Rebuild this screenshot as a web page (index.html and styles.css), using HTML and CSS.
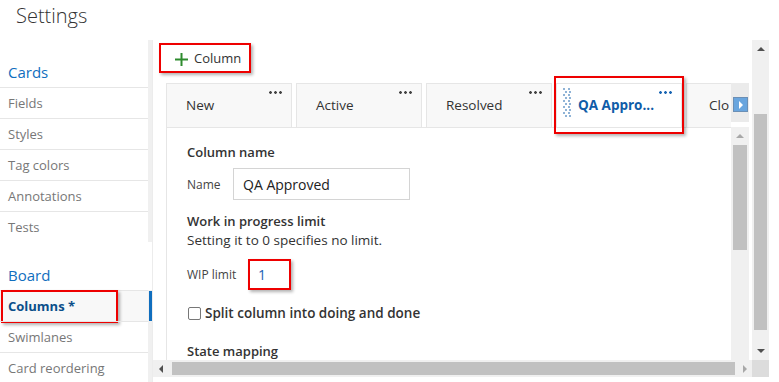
FILE: index.html
```html
<!DOCTYPE html>
<html lang="en">
  <head>
    <meta charset="UTF-8" />
    <title>Settings</title>
    <link rel="stylesheet" href="styles.css">
  </head>
  <body>
    <header class="top">
      <h1>Settings</h1>
    </header>
    <div class="main">
      <nav class="side">
        <h2>Cards</h2>
        <ul>
          <li>Fields</li>
          <li>Styles</li>
          <li>Tag colors</li>
          <li>Annotations</li>
          <li>Tests</li>
        </ul>
        <h2 class="board-head">Board</h2>
        <ul>
          <li class="active"><span class="mark">Columns *</span></li>
          <li>Swimlanes</li>
          <li>Card reordering</li>
        </ul>
      </nav>

      <div class="content">
        <div class="view">
          <div class="toolbar">
            <button class="add">
              <svg width="13" height="13" viewBox="0 0 13 13">
                <rect x="5.5" y="0" width="2" height="13" fill="#2e8b2e" />
                <rect x="0" y="5.5" width="13" height="2" fill="#2e8b2e" />
              </svg>
              Column
            </button>
          </div>
          <div class="board">
            <div class="board-main">
              <div class="tabs">
                <div class="tab">New<span class="more"></span></div>
                <div class="tab">Active<span class="more"></span></div>
                <div class="tab">Resolved<span class="more"></span></div>
                <div class="tab selected">
                  <svg class="grip" width="9" height="32" viewBox="0 0 9 32">
                    <g fill="#8fb3d6">
                      <rect x="0" y="0" width="2" height="2" /><rect x="5" y="0" width="2" height="2" />
                      <rect x="2" y="3" width="2" height="2" /><rect x="6" y="3" width="2" height="2" />
                      <rect x="0" y="6" width="2" height="2" /><rect x="5" y="6" width="2" height="2" />
                      <rect x="2" y="9" width="2" height="2" /><rect x="6" y="9" width="2" height="2" />
                      <rect x="0" y="12" width="2" height="2" /><rect x="5" y="12" width="2" height="2" />
                      <rect x="2" y="15" width="2" height="2" /><rect x="6" y="15" width="2" height="2" />
                      <rect x="0" y="18" width="2" height="2" /><rect x="5" y="18" width="2" height="2" />
                      <rect x="2" y="21" width="2" height="2" /><rect x="6" y="21" width="2" height="2" />
                      <rect x="0" y="24" width="2" height="2" /><rect x="5" y="24" width="2" height="2" />
                      <rect x="2" y="27" width="2" height="2" /><rect x="6" y="27" width="2" height="2" />
                    </g>
                  </svg>
                  QA Appro...<span class="more"></span>
                </div>
                <div class="tab last">Clo</div>
              </div>
              <div class="panel">
                <h3>Column name</h3>
                <div class="field">
                  <label>Name</label>
                  <input class="name-input" type="text" value="QA Approved">
                </div>
                <h3 class="wip-head">Work in progress limit</h3>
                <p class="hint">Setting it to 0 specifies no limit.</p>
                <div class="field wip">
                  <label>WIP limit</label>
                  <input class="wip-input" type="text" value="1">
                </div>
                <label class="check"><span class="box"></span>Split column into doing and done</label>
                <h3 class="state-head">State mapping</h3>
              </div>
            </div>
            <div class="rail">
              <div class="tab-arrow"><span class="arrow-btn"></span></div>
              <div class="vscroll inner">
                <span class="up light"></span>
                <span class="thumb"></span>
              </div>
            </div>
          </div>
        </div>
        <div class="vscroll outer">
          <span class="up"></span>
          <span class="thumb"></span>
          <span class="down"></span>
        </div>
        <div class="hscroll">
          <span class="left"></span>
          <span class="thumb"></span>
          <span class="right"></span>
        </div>
        <div class="corner"></div>
      </div>
    </div>
  </body>
</html>
```

FILE: styles.css
```css
body {
  margin: 0;
  font-family: "Open Sans", "Noto Sans", sans-serif;
  color: #333;
  background: white;
}
.top {
  height: 40px;
}
.top h1 {
  margin: 0;
  padding: 2px 0 0 16px;
  font-size: 20px;
  font-weight: 300;
  line-height: 28px;
  color: #333;
}
.main {
  display: flex;
  height: 342px;
}
.side {
  width: 148px;
  border-right: 4px solid #f0f0f0;
  flex-shrink: 0;
}
.side h2 {
  margin: 0;
  height: 47px;
  padding-left: 8px;
  box-sizing: border-box;
  display: flex;
  align-items: flex-end;
  padding-bottom: 5px;
  font-size: 15px;
  font-weight: 400;
  color: #106ebe;
}
.side h2.board-head {
  height: 48px;
  background: white;
  margin-right: -4px;
}
.side ul {
  list-style: none;
  margin: 0;
  padding: 0;
}
.side li {
  height: 31px;
  box-sizing: border-box;
  border-top: 1px solid #e6e6e6;
  padding-left: 8px;
  display: flex;
  align-items: center;
  font-size: 13px;
  color: #777;
  position: relative;
}
.side li.active {
  font-weight: 700;
  color: #0b4f8a;
  background: #f8f8f8;
}
.side li.active::after {
  content: "";
  position: absolute;
  top: 0;
  bottom: 0;
  right: -4px;
  width: 3px;
  background: #106ebe;
}
.mark {
  position: relative;
}
.mark::before {
  content: "";
  position: absolute;
  left: -7px;
  right: -43px;
  top: -7px;
  bottom: -8px;
  border: 2px solid #e00;
  box-shadow: 2px 2px 3px rgba(0, 0, 0, 0.3);
}
.content {
  flex: 1;
  display: grid;
  grid-template-columns: 599px 17px;
  grid-template-rows: 320px 17px;
  border-left: 1px solid #ececec;
}
.view {
  display: flex;
  flex-direction: column;
  min-height: 0;
}
.toolbar {
  flex-shrink: 0;
  height: 43px;
  padding: 3px 0 0 6px;
  box-sizing: border-box;
}
.add {
  display: flex;
  align-items: center;
  gap: 6px;
  height: 30px;
  width: 92px;
  padding: 0 0 0 14px;
  font-family: inherit;
  font-size: 13px;
  color: #333;
  background: white;
  border: 2px solid #e00;
  box-shadow: 2px 2px 3px rgba(0, 0, 0, 0.3);
  box-sizing: border-box;
}
.add svg {
  margin-top: 3px;
}
.board {
  flex: 1;
  min-height: 0;
  display: flex;
  margin: 0 2px 0 13px;
}
.board-main {
  width: 565px;
  min-height: 0;
  display: flex;
  flex-direction: column;
}
.tabs {
  flex-shrink: 0;
  display: flex;
  gap: 4px;
  height: 44px;
}
.tab {
  flex: 0 0 126px;
  box-sizing: border-box;
  background: #f8f8f8;
  border: 1px solid #e6e6e6;
  border-bottom: none;
  padding: 12px 0 0 19px;
  font-size: 13.5px;
  color: #333;
  position: relative;
  white-space: nowrap;
}
.tab.last {
  flex: 0 0 45px;
  overflow: hidden;
  border-right: none;
  padding-left: 22px;
}
.more {
  position: absolute;
  top: 7px;
  right: 9px;
  width: 14px;
  height: 3px;
  background: radial-gradient(circle, #444 1.1px, transparent 1.6px) 0 0 / 5px 3px repeat-x;
}
.tab.selected {
  background: white;
  color: #0f5ca8;
  font-weight: 700;
  padding-left: 21px;
}
.tab.selected .more {
  background-image: radial-gradient(circle, #1a66b3 1.1px, transparent 1.6px);
}
.tab.selected::before {
  content: "";
  position: absolute;
  left: -3px;
  right: -3px;
  top: -8px;
  bottom: -7px;
  border: 2px solid #e00;
  box-shadow: 2px 2px 3px rgba(0, 0, 0, 0.3);
  z-index: 2;
}
.grip {
  position: absolute;
  left: 6px;
  top: 4px;
}
.panel {
  flex: 1;
  min-height: 0;
  border-top: 1px solid #e6e6e6;
  border-left: 1px solid #e6e6e6;
  padding: 14px 0 0 20px;
  overflow: hidden;
}
.panel h3 {
  margin: 0;
  font-size: 13px;
  font-weight: 600;
  color: #333;
  line-height: 20px;
}
.field {
  display: flex;
  align-items: center;
  margin-top: 6px;
}
.field label {
  width: 46px;
  font-size: 12px;
  color: #444;
}
.name-input {
  width: 177px;
  height: 32px;
  box-sizing: border-box;
  border: 1px solid #d4d4d4;
  padding: 0 9px;
  font-family: inherit;
  font-size: 14px;
  color: #222;
}
.panel h3.wip-head {
  margin-top: 11px;
}
.hint {
  margin: 0;
  font-size: 13.5px;
  line-height: 19px;
  color: #333;
}
.field.wip {
  margin-top: 9px;
}
.field.wip label {
  width: 61px;
}
.wip-input {
  width: 43px;
  height: 31px;
  box-sizing: border-box;
  border: 2px solid #e00;
  box-shadow: 2px 2px 3px rgba(0, 0, 0, 0.3);
  padding: 0 8px;
  font-family: inherit;
  font-size: 14px;
  color: #1a5fb4;
}
.check {
  display: flex;
  align-items: center;
  gap: 4px;
  margin-top: 14px;
  font-size: 13.5px;
  font-weight: 600;
  color: #333;
}
.box {
  width: 11px;
  height: 11px;
  border: 1px solid #777;
  border-radius: 2px;
  margin-left: 1px;
}
.panel h3.state-head {
  margin-top: 19px;
}
.rail {
  width: 18px;
  min-height: 0;
  display: flex;
  flex-direction: column;
}
.tab-arrow {
  flex-shrink: 0;
  height: 39px;
  background: #ebebeb;
  display: flex;
  align-items: center;
  justify-content: center;
  margin-bottom: 5px;
}
.arrow-btn {
  width: 13px;
  height: 13px;
  background: #69a5de;
  border: 1px solid #6b8fb5;
  position: relative;
  margin-top: 4px;
}
.arrow-btn::after {
  content: "";
  position: absolute;
  left: 5px;
  top: 3px;
  border-left: 4px solid white;
  border-top: 4px solid transparent;
  border-bottom: 4px solid transparent;
}
.vscroll {
  background: #f0f0f0;
  position: relative;
}
.vscroll.inner {
  flex: 1;
}
.vscroll .thumb {
  position: absolute;
  left: 2px;
  right: 2px;
  background: #c1c1c1;
}
.vscroll.inner .thumb {
  top: 18px;
  height: 105px;
}
.vscroll.outer .thumb {
  top: 74px;
  height: 216px;
}
.up, .down, .left, .right {
  position: absolute;
  width: 0;
  height: 0;
}
.up {
  top: 7px;
  left: 5px;
  border-left: 4px solid transparent;
  border-right: 4px solid transparent;
  border-bottom: 4px solid #505050;
}
.up.light {
  border-bottom-color: #a8a8a8;
}
.down {
  bottom: 7px;
  left: 5px;
  border-left: 4px solid transparent;
  border-right: 4px solid transparent;
  border-top: 4px solid #505050;
}
.hscroll {
  background: #f0f0f0;
  position: relative;
}
.hscroll .thumb {
  position: absolute;
  top: 2px;
  bottom: 2px;
  left: 19px;
  right: 17px;
  background: #c1c1c1;
}
.left {
  top: 5px;
  left: 6px;
  border-top: 4px solid transparent;
  border-bottom: 4px solid transparent;
  border-right: 4px solid #505050;
}
.right {
  top: 5px;
  right: 5px;
  border-top: 4px solid transparent;
  border-bottom: 4px solid transparent;
  border-left: 4px solid #a8a8a8;
}
.corner {
  background: #dcdcdc;
}
```
